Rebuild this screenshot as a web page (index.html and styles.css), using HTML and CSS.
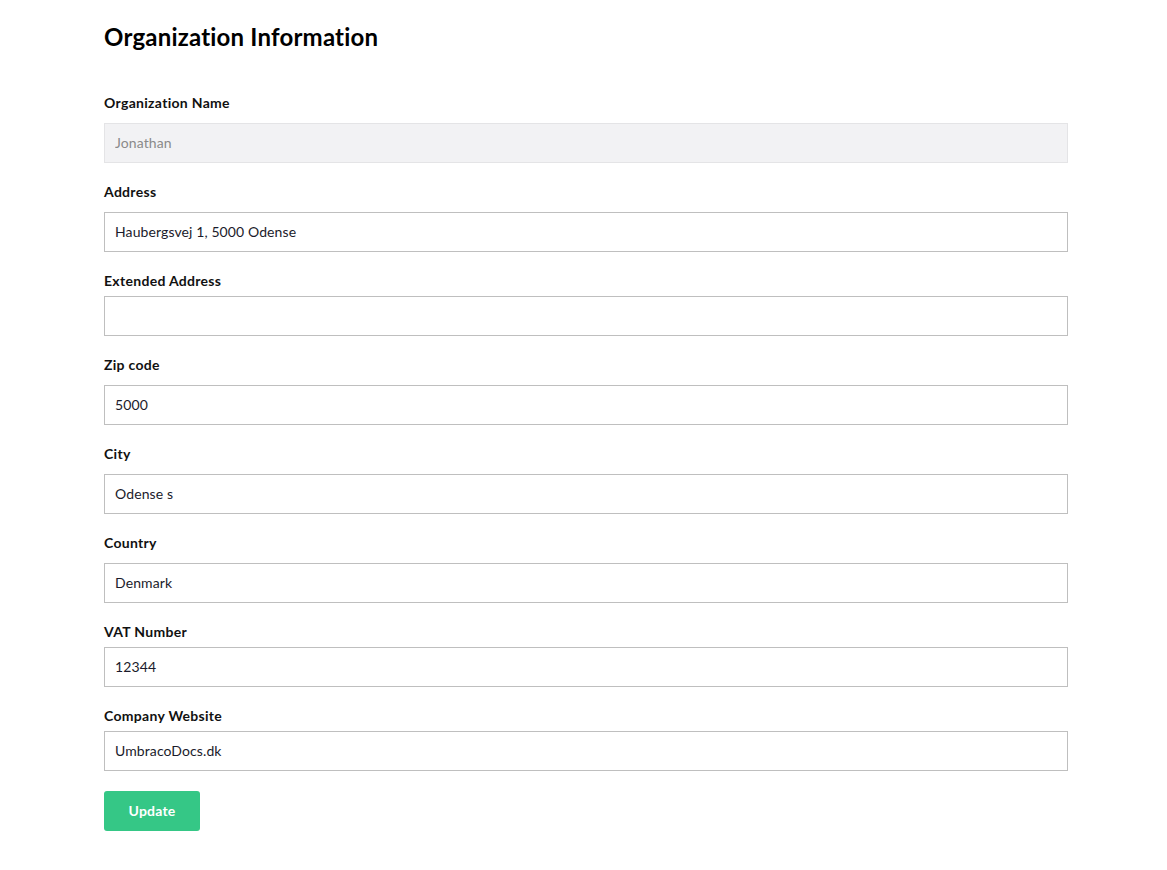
FILE: index.html
```html
<!DOCTYPE html>
<html lang="en">
<head>
<meta charset="utf-8">
<title>Organization Information</title>
<link rel="stylesheet" href="styles.css">
</head>
<body>
<main class="page">
  <h1 class="title">Organization Information</h1>
  <form class="form">
    <div class="group">
      <label class="label">Organization Name</label>
      <input class="input input--disabled" type="text" value="Jonathan" disabled>
    </div>
    <div class="group">
      <label class="label">Address</label>
      <input class="input" type="text" value="Haubergsvej 1, 5000 Odense">
    </div>
    <div class="group">
      <label class="label label--tight">Extended Address</label>
      <input class="input" type="text" value="">
    </div>
    <div class="group">
      <label class="label">Zip code</label>
      <input class="input" type="text" value="5000">
    </div>
    <div class="group">
      <label class="label">City</label>
      <input class="input" type="text" value="Odense s">
    </div>
    <div class="group">
      <label class="label">Country</label>
      <input class="input" type="text" value="Denmark">
    </div>
    <div class="group">
      <label class="label label--tight">VAT Number</label>
      <input class="input" type="text" value="12344">
    </div>
    <div class="group group--last">
      <label class="label label--tight">Company Website</label>
      <input class="input" type="text" value="UmbracoDocs.dk">
    </div>
    <button class="btn" type="button">Update</button>
  </form>
</main>
</body>
</html>
```

FILE: styles.css
```css
* { box-sizing: border-box; }
html, body { margin: 0; padding: 0; background: #fff; }
body {
  font-family: Lato, "Open Sans", sans-serif;
  color: #1b1b1b;
  font-variant-ligatures: none;
}
.page {
  width: 964px;
  margin-left: 104px;
  padding-top: 23px;
}
.title {
  margin: 0 0 41px;
  font-size: 24px;
  line-height: 1.2;
  font-weight: 700;
  color: #000;
  letter-spacing: 0.2px;
}
.form { display: flex; flex-direction: column; align-items: flex-start; }
.group {
  width: 100%;
  display: flex;
  flex-direction: column;
  margin-bottom: 19px;
}
.group--last { margin-bottom: 20px; }
.label {
  font-size: 14px;
  line-height: 20px;
  font-weight: 700;
  color: #111;
  margin-bottom: 10px;
  letter-spacing: 0.3px;
}
.label--tight { margin-bottom: 5px; }
.input {
  width: 100%;
  height: 40px;
  border: 1px solid #bfbfbf;
  background: #fff;
  padding: 0 10px 1px;
  font-family: Lato, "Open Sans", sans-serif;
  font-variant-ligatures: none;
  font-size: 14px;
  letter-spacing: 0.1px;
  color: #1b1b2b;
  outline: none;
  border-radius: 0;
}
.input--disabled {
  background: #f2f2f4;
  border-color: #e4e4e6;
  color: #8a8a8a;
}
.btn {
  width: 96px;
  height: 40px;
  border: none;
  border-radius: 3px;
  background: #35c786;
  color: #fff;
  font-family: Lato, "Open Sans", sans-serif;
  font-size: 14px;
  font-weight: 700;
  letter-spacing: 0.2px;
  cursor: pointer;
}
```
